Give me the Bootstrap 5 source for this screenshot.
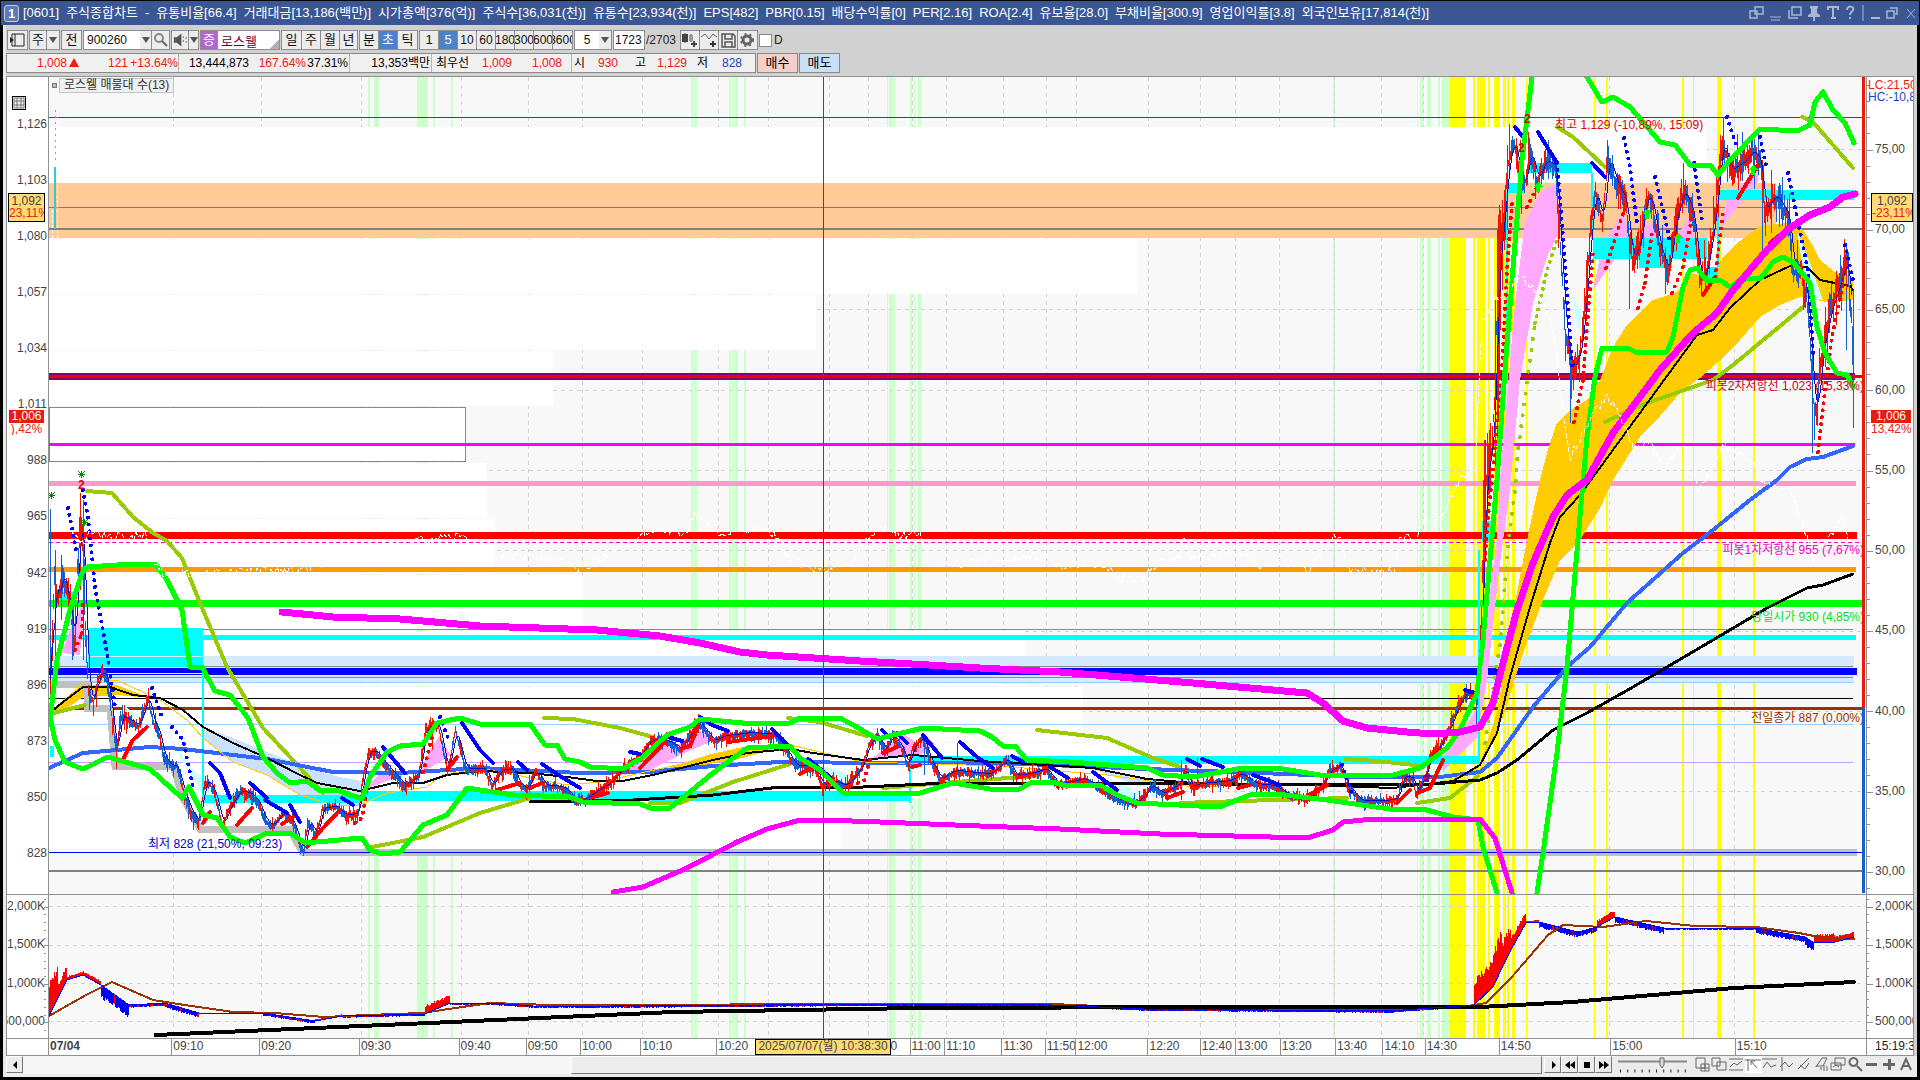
<!DOCTYPE html>
<html lang="ko">
<head>
<meta charset="utf-8">
<meta name="viewport" content="width=device-width, initial-scale=1">
<title>[0601] 주식종합차트</title>
<link href="https://cdn.jsdelivr.net/npm/bootstrap@5.3.0/dist/css/bootstrap.min.css" rel="stylesheet">
<style>
body{background:#000;font:12px/14px "Liberation Sans","Noto Sans CJK KR",sans-serif;color:#222;height:100vh;padding:1px 3px 3px 1px;overflow:hidden}
.titlebar{background:#3a5693;color:#fff;height:24px;font-size:13px;padding-left:3px;flex:none;margin-right:-2px}
.title-no{border:1px solid #c5cfe6;border-radius:3px;width:15px;height:17px;line-height:15px;font-weight:bold;text-align:center;margin-right:4px;background:#5f79b3}
.title-parts{gap:7px}
.tb-ico{width:19px;height:16px;fill:none;stroke:#a9b6d4;stroke-width:2}
.shell{background:#d1d1d1;border-left:3px solid #e8e8e8;margin-left:2px}
.tools{height:28px;padding:5px 0 0 1px;flex:none}
.cell-btn{border:1px solid #8e8e8e;border-left-color:#f6f6f6;background:#ececec;height:20px;padding:0;font:inherit;font-size:13px;color:#111;overflow:hidden;text-align:center;flex:none;display:flex;align-items:center;justify-content:center;white-space:nowrap}
.cell-btn.active{background:#4c83c7;color:#fff}
.cell-sm{font-size:12px}
.grp{border:1px solid #8e8e8e;display:flex;height:20px;flex:none;margin-right:1px;background:#ececec;overflow:hidden}
.grp .cell-btn{border-width:0 1px 0 0;height:18px}
.grp .cell-btn:last-child{border-right:0}
.box-in{border:0;background:#fff;font:inherit;color:#111;padding:0 3px;min-width:0;border-radius:0;height:18px}
.name-in{width:61px;color:#70003c;font-size:13px;background:linear-gradient(135deg,#fff 88%,#b0b0b0 88%)}
.w12{width:12px}.w17{width:17px}.w19{width:19px}.w20{width:20px}
.sel-arrow{border:4px solid transparent;border-top:6px solid #555;border-bottom:0}
.ico{width:17px;height:16px;fill:none;stroke:#666;stroke-width:1}
.quotes{height:23px;flex:none;padding-left:0}
.quote-box{border:1px solid #888;background:#f0f0f0;height:20px;width:750px;color:#000;line-height:18px;font-size:12px}
.quote-box>div{border-right:1px solid #b5b5b5;display:flex;flex:none;overflow:hidden;white-space:nowrap}
.quote-box>div:last-child{border:0;flex:1}
.quote-box span{text-align:right;flex:none}
.up{color:#e8200c}.dn{color:#1546c8}
.order{height:20px;border:1px solid #888;width:41px;margin-left:1px;padding:0;font:inherit;font-size:13px;color:#000}
.buy{background:#f6cfca}.sell{background:#c8dff5}
.chart-grid{display:grid;grid-template-columns:41px minmax(0,1fr) 47px;grid-template-rows:minmax(0,1fr) 144px 17px;border:1px solid #909090;border-bottom:0;background:#fff;margin-right:3px;min-height:0}
.chart-grid>*{position:relative;border-bottom:1px solid #909090;overflow:hidden;min-width:0}
.plot{border-left:1px solid #909090;background:#f8f8f8}
.plot svg{display:block;width:100%;height:100%}
.axis{display:flex;flex-direction:column;justify-content:space-between;color:#444;line-height:12px}
.axis-l{text-align:right;padding:41px 1px 35px 0}
.axis-r{border-left:1px solid #909090;padding:66px 0 17px 8px}
.sub-l{padding:5px 3px 11px 0;direction:rtl}
.sub-r{padding:5px 0 11px 8px}
.tick-svg{position:absolute;top:0;left:0;width:8px;height:100%;stroke:#909090;shape-rendering:crispEdges}
.sub-l .tick-svg{left:auto;right:0}
.tag-box{position:absolute;width:37px;height:29px;background:#ffdc73;border:1px solid #000;line-height:12px;padding-top:1px;text-align:center;overflow:hidden;white-space:nowrap}
.tag-red{position:absolute;width:40px;line-height:12px;text-align:center;color:#e8200c;overflow:hidden;white-space:nowrap}
.tag-red b{display:block;background:#e81c0c;color:#fff;font-weight:400;height:13px}
.top116{top:116px}.top333{top:333px}
.lc{position:absolute;left:1px;top:2px;line-height:12px;white-space:nowrap}
.legend{position:absolute;left:3px;top:1px;color:#333}
.legend i{width:5px;height:5px;border:1px solid #777;background:#bbb;margin-right:2px}
.legend span{background:#f0f0f0;border:1px solid #c4c4c4;line-height:13px;padding:0 4px}
.gridbtn{position:absolute;left:5px;top:19px;width:14px;height:14px;padding:0;border:1px solid #000;background:#fff}
.gridbtn svg{display:block;width:12px;height:12px;stroke:#777;fill:#eee}
.times{display:flex;border-left:1px solid #909090;background:#fff;color:#444}
.times span{flex:1 1 0;min-width:0;border-right:1px solid #909090;text-indent:1px;white-space:nowrap;overflow:hidden;line-height:15px}
.times span:last-of-type{border:0}
.cursor-date{position:absolute;left:706px;top:0;width:136px;height:16px;line-height:13px;background:#ffdc73;border:1px solid #000;white-space:nowrap;text-align:center}
.scrollrow{height:21px;flex:none;background:#ececec;padding:0 2px 3px 0}
.sb-btn{width:17px;height:17px;padding:0;border:1px solid #777;border-left-color:#fff;border-top-color:#fff;background:#ececec;display:flex;align-items:center;justify-content:center;flex:none}
.sb-btn svg{width:12px;height:10px;fill:#000}
.sb-track{background:#f7f7f7;flex:549 1 0}
.sb-thumb{flex:970 1 0;background:#ededed;border:1px solid #777;border-top-color:#fff;border-left-color:#fff;margin-right:2px}
.zoomer{width:70px;height:17px;margin:0 6px}
.zoomer input{position:absolute;opacity:0;width:70px;height:17px}
.zoomer svg,.scroll-ico svg{display:block;stroke:#666;fill:none}
.scroll-ico{width:17px;height:17px;border:0;padding:0;background:none;flex:none}
.scroll-ico.on{background:#fff}
.chk{appearance:none;width:13px;height:13px;background:#fff;border:1px solid #888;margin:0 2px 0 0}
text{font-size:12px}
.ln{fill:none;stroke-linejoin:round;stroke-linecap:round}
.dots{fill:none;stroke-width:4;stroke-linecap:round;stroke-dasharray:0 7}
.solid{fill:none;stroke-width:4;stroke-linecap:round}
</style>
<script src="https://cdn.jsdelivr.net/npm/bootstrap@5.3.0/dist/js/bootstrap.bundle.min.js"></script>
</head>
<body class="d-flex flex-column">
<header class="titlebar d-flex align-items-center">
<span class="title-no">1</span>
<div class="title-parts d-flex flex-grow-1 text-nowrap"><span>[0601]</span><span>주식종합차트</span><span>-</span><span>유통비율[66.4]</span><span>거래대금[13,186(백만)]</span><span>시가총액[376(억)]</span><span>주식수[36,031(천)]</span><span>유통수[23,934(천)]</span><span>EPS[482]</span><span>PBR[0.15]</span><span>배당수익률[0]</span><span>PER[2.16]</span><span>ROA[2.4]</span><span>유보율[28.0]</span><span>부채비율[300.9]</span><span>영업이익률[3.8]</span><span>외국인보유[17,814(천)]</span></div>
<svg class="tb-ico" viewBox="0 0 19 16"><path d="M7 2h8v7H7zM2 6h7v7H2z" stroke-width="1.5"/></svg>
<svg class="tb-ico" viewBox="0 0 19 16"><path d="M3 12h11M4 15h9" stroke-width="1"/></svg>
<svg class="tb-ico" viewBox="0 0 19 16"><path d="M6 2h9v8H6zM3 5v8h9" stroke-width="1.5"/></svg>
<svg class="tb-ico" viewBox="0 0 19 16"><path d="M5 1h8v2l-1 1v4l3 2v2H3v-2l3-2V4L5 3zM8 11h2v5H8z" fill="#a9b6d4" stroke="none"/></svg>
<svg class="tb-ico" viewBox="0 0 19 16"><path d="M4 5V2h10v3M9 2v12M7 13h5"/></svg>
<svg class="tb-ico" viewBox="0 0 19 16"><path d="M4 5c0-5 8-4 6 0-1 2-3 2-3 5M7 12v2"/></svg>
<svg class="tb-ico" viewBox="0 0 19 16"><path d="M1 0v16" stroke-width="1"/><path d="M9 13h9"/></svg>
<svg class="tb-ico" viewBox="0 0 19 16"><path d="M9 3h7v6h-2M6 6h7v7H6z" stroke-width="1.5"/></svg>
<svg class="tb-ico" viewBox="0 0 19 16"><path d="M7 4l8 9M15 4l-8 9" stroke-width="1"/></svg>
</header>
<main class="shell flex-grow-1 d-flex flex-column">
<div class="tools d-flex">
<div class="grp"><button class="cell-btn w19" aria-label="패널"><svg class="ico" viewBox="0 0 17 16"><path d="M3 2h12v12H3zM6 2v12" stroke="#222"/><path d="M1 5l4 3-4 3z" fill="#222" stroke="none"/></svg></button></div>
<div class="grp"><button class="cell-btn w17">주</button><button class="cell-btn w12" aria-label="선택"><i class="sel-arrow"></i></button></div>
<div class="grp"><button class="cell-btn w19">전</button></div>
<div class="grp"><input class="box-in" style="width:56px" value="900260" aria-label="종목코드"><button class="cell-btn w12" aria-label="코드목록"><i class="sel-arrow"></i></button><button class="cell-btn w17" aria-label="검색"><svg class="ico" viewBox="0 0 17 16"><circle cx="7" cy="6" r="4" stroke-width="2" stroke="#888"/><path d="M10 9l5 5" stroke-width="2"/></svg></button></div>
<div class="grp"><button class="cell-btn w17" aria-label="소리"><svg class="ico" viewBox="0 0 17 16"><path d="M2 5h3l5-4v14l-5-4H2z" fill="#555" stroke="none"/><path d="M12 4v8M15 5v6" stroke-dasharray="2 2"/></svg></button><button class="cell-btn" style="width:9px" aria-label="소리 선택"><i class="sel-arrow"></i></button></div>
<div class="grp"><span class="cell-btn w17" style="background:#b565d0;color:#fff">증</span><input class="box-in name-in" value="로스웰" aria-label="종목명"></div>
<div class="grp"><button class="cell-btn w20">일</button><button class="cell-btn w19">주</button><button class="cell-btn w19">월</button><button class="cell-btn w17">년</button></div>
<div class="grp"><button class="cell-btn w19">분</button><button class="cell-btn w19 active">초</button><button class="cell-btn w19">틱</button></div>
<div class="grp"><button class="cell-btn w19">1</button><button class="cell-btn w19 active">5</button><button class="cell-btn cell-sm w19">10</button><button class="cell-btn cell-sm w19">60</button><button class="cell-btn cell-sm w19">180</button><button class="cell-btn cell-sm w19">300</button><button class="cell-btn cell-sm w19">600</button><button class="cell-btn cell-sm w19">3600</button></div>
<div class="grp"><input class="box-in text-center" style="width:24px" value="5" aria-label="주기"><button class="cell-btn w12" aria-label="주기 선택"><i class="sel-arrow"></i></button></div>
<div class="grp"><input class="box-in" style="width:30px;padding:0 1px" value="1723" aria-label="표시 봉수"></div>
<span style="width:34px;line-height:20px">/2703</span>
<div class="grp"><button class="cell-btn w19" aria-label="봉 유형"><svg class="ico" viewBox="0 0 17 16"><path d="M3 1v10M9 2v8" stroke="#444"/><path d="M1 3h4v6H1zM12 9v6M9 12h6" fill="#444" stroke="#444" stroke-width="2"/><path d="M7 3h4v6H7z" fill="#999" stroke="none"/></svg></button><button class="cell-btn w19" aria-label="지표 추가"><svg class="ico" viewBox="0 0 17 16"><path d="M0 5l4-3 4 5 4-5 4 3"/><path d="M12 9v6M9 12h6" stroke="#333" stroke-width="2"/></svg></button><button class="cell-btn w19" aria-label="저장"><svg class="ico" viewBox="0 0 17 16"><path d="M2 2h11l2 2v11H2zM5 2v5h7V2M5 15v-5h7v5" stroke="#555" stroke-width="1.5"/></svg></button><button class="cell-btn w19" aria-label="설정"><svg class="ico" viewBox="0 0 17 16"><circle cx="8" cy="8" r="4" stroke-width="3"/><circle cx="8" cy="8" r="6" stroke-width="2" stroke-dasharray="2 3"/></svg></button></div>
<label class="d-flex align-items-center" style="height:20px"><input type="checkbox" class="chk">D</label>
</div>
<div class="quotes d-flex">
<div class="quote-box d-flex">
<div style="width:172px"><span class="up" style="width:60px">1,008</span><svg width="13" height="18" viewBox="0 0 13 18"><path d="M2 13h10L7 4z" fill="#e8200c"/></svg><span class="up" style="width:48px">121</span><span class="up" style="width:50px">+13.64%</span></div>
<div style="width:171px"><span style="width:70px">13,444,873</span><span class="up" style="width:57px">167.64%</span><span style="width:42px">37.31%</span></div>
<div style="width:82px"><span style="width:80px">13,353백만</span></div>
<div style="width:140px"><span style="width:37px">최우선</span><span class="up" style="width:43px">1,009</span><span class="up" style="width:50px">1,008</span></div>
<div><span style="width:13px">시</span><span class="up" style="width:33px">930</span><span style="width:28px">고</span><span class="up" style="width:41px">1,129</span><span style="width:21px">저</span><span class="dn" style="width:34px">828</span></div>
</div>
<button class="order buy">매수</button><button class="order sell">매도</button>
</div>
<section class="chart-grid flex-grow-1">
<div class="axis axis-l"><span>1,126</span><span>1,103</span><span>1,080</span><span>1,057</span><span>1,034</span><span>1,011</span><span>988</span><span>965</span><span>942</span><span>919</span><span>896</span><span>873</span><span>850</span><span>828</span>
<button class="gridbtn" aria-label="데이터 표"><svg viewBox="0 0 12 12"><path d="M1 1h10v10H1zM1 4h10M1 8h10M4 1v10M8 1v10"/></svg></button>
<div class="tag-box top116" style="left:1px">1,092<br><span class="up">23,11%</span></div>
<div class="tag-red top333" style="left:2px;width:35px"><b>1,006</b>),42%</div></div>
<div class="plot">
<svg id="price" viewBox="49 77 1817 817" preserveAspectRatio="none" shape-rendering="crispEdges">
<g id="bands"></g><g id="gridlines" stroke="#d2d2d2" stroke-dasharray="4 4"></g>
<g fill="#fff"><path d="M49 127h1658v56H49zM49 239h1088v55H49zM49 295h767v55H49zM49 351h504v55H49zM49 463h437v11h1v44H49zM49 519h446v55H49zM49 575h534v55H49zM49 631h976v55H49zM49 687h1034v55H49zM49 743h1078v55H49zM49 799h792v50H49z"/><path d="M49 407.5h416.500v54H49z" stroke="#888"/></g>
<path fill="#fc9" d="M49 183h1727v55H49z"/>
<path fill="#d6eaff" d="M49 656h1805v27H49z"/>
<g id="hl"></g>
<path fill="#fc0" d="M1463 782L1480 763 1497 713 1515 603 1527 540 1540 480 1547 453 1557 423 1570 410 1587 400 1600 380 1613 347 1627 325 1640 312 1653 300 1677 292 1693 273 1710 280 1723 257 1740 241 1760 226 1787 223 1803 230 1812 244 1820 260 1835 272 1853 277V300L1827 302 1800 297 1780 305 1760 317 1740 340 1717 363 1700 378 1683 390 1660 416 1640 437 1613 480 1600 508 1580 540 1560 560 1543 600 1523 653 1503 717 1480 767zM52 714L57 705 83 685H117L150 698 117 695 83 697 60 713zM665 769L707 755 743 747 790 744 743 758 693 767z"/>
<path fill="#c8e2ff" d="M200 726L233 738 267 752 300 765 330 775 362 781V805L333 805 300 795 267 775 233 762 203 738zM1093 769L1147 779 1193 781 1140 786z"/>
<path fill="#faf" d="M1443 757L1478 707 1483 647 1497 537 1500 480 1515 303 1525 223 1540 193 1557 183 1560 230 1547 257 1533 303 1520 380 1510 490 1500 563 1487 680 1477 737 1443 772zM1593 290L1603 243 1623 213 1630 237 1607 270zM1633 247L1640 230 1653 223 1657 240zM1720 230L1727 200 1753 173 1760 170 1757 183 1727 220zM1675 240L1690 215 1695 240 1680 252zM62 653L70 630 77 617 84 600 80 655zM363 790L380 773 400 773 420 770 430 750 440 735 450 755 430 768 400 776zM623 775L643 757 657 742 680 744 693 730 712 732 710 742 680 755 650 770zM870 760L885 748 905 735 920 745 925 735 935 745 920 755z"/>
<path fill="#cff" d="M117 700L143 720 125 712zM167 733L190 767 213 787 230 803 213 807 200 790 180 757zM1572 292L1583 317V337L1577 325zM1797 230L1810 263 1823 300H1810L1800 250zM275 795L290 815 300 830 280 815zM790 745L812 765 808 778 796 762zM820 765L850 775 843 785 825 778zM1117 782L1145 795 1135 800 1120 795z"/>
<g fill="#0ff"><path d="M88 628h115v39H88zM50 746h4v11h-4zM55 592h19v8H55zM202 667h2v130h-2zM203 795h159v8H203zM362 791h547v10H362zM910 756h569v8H910zM909 757h2v46h-2zM1478 550h2v214h-2zM1482 521h11v21h-11zM1497 383h9v12h-9zM1506 193h2v190h-2zM1507 183h18v10h-18zM1527 163h65v10h-65zM1591 173h2v66h-2zM1593 238h114v21H1593zM1639 259h33v9h-33zM1707 267h11v11h-11zM1718 190h136v10h-136zM1717 200h2v67h-2z"/></g>
<path d="M88 656.500h114M88 673.500h114" stroke="#d6eaff"/>
<path fill="none" stroke="#c0c0c0" stroke-width="7" d="M50 684H87V708H110L115 766H173L183 798 200 829H290L302 852.500H1857"/>
<path stroke="#00f" d="M49 852.500H1863"/>
<g class="ln" stroke="#9c0" stroke-width="4"><path d="M87 491L112 493 133 517 153 533 167 541 182 558 200 603 227 667 263 728 290 757 323 793M50 714L85 705M367 848L423 837 480 813 530 798M544 718L573 719 620 728 653 737M650 803H680L733 782 790 764M788 718L820 722 867 736M883 788L980 780 1038 776M1037 730L1107 738 1153 758 1180 767M1180 803L1273 800 1347 798M1345 759L1377 761 1424 766M1417 803L1450 798 1478 776M1605 422L1647 403 1713 380 1733 365 1803 307M1557 127L1573 137 1605 167M1802 117L1813 122 1853 168"/></g>
<path class="dots" stroke="#9c0" style="stroke-dasharray:0 11" d="M1485 743L1500 645 1508 545 1515 490 1518 450 1527 383 1535 323"/><path class="dots" stroke="#9c0" d="M1535 323L1547 270 1557 240"/>
<g class="ln" stroke="#36f" stroke-width="4"><path d="M49 768L83 753 150 747 183 749 267 759 333 772 400 773 480 768 580 773 647 772 713 766 780 762 880 763 1000 763 1147 769 1260 773 1360 777 1440 777 1480 772 1497 758 1533 707 1567 667 1590 647 1627 603 1683 553 1713 530 1750 500 1777 480 1790 467 1807 459 1823 457 1853 446"/></g>
<path class="ln" stroke="#fc0" d="M53 712L83 682 117 680 160 700 187 720 203 738 233 762 267 775 300 795 333 805H360L387 793 427 787 443 775 480 768 567 785 600 782 650 771 713 757 790 745 863 762 1000 766 1107 775 1193 787 1300 783 1393 788 1450 780 1478 768"/>
<g class="ln" stroke="#000"><path stroke-width="2" d="M50 713L63 702 83 687H110L133 695 160 698 183 710 203 727 233 743 267 758 300 775 317 783 360 791 393 783H423L447 775 480 771 530 773 567 777 597 781H623L657 774 713 760 747 753 790 749 813 753 863 760 913 755 980 761 1093 768 1147 779 1193 783 1280 784 1393 788 1453 781 1480 765 1497 733 1510 677 1530 607 1550 543 1560 517 1580 495 1697 335 1713 330 1730 308 1760 280 1790 266 1807 267 1820 280 1850 286 1853 290"/><path stroke-width="3" d="M530 802L633 800 713 795 780 787 863 787 947 783H1147L1293 785 1433 784 1480 780 1497 773 1517 760 1553 730 1587 713 1633 687 1713 640 1767 608 1807 588 1823 585 1853 574"/></g>
<g id="candles"></g>
<g id="sar"></g>
<g class="ln" stroke="#0f0" stroke-width="5"><path d="M50 720L57 660 70 610 82 573 87 567 117 565 155 564 167 580 182 610 190 667H202L215 691 230 695 248 718 263 757 277 773 290 783 307 781 320 791 337 790 362 799 370 777 387 752 400 746 423 744 437 723 460 718 480 724H530L545 745H557L565 759 580 762 590 767 623 769 643 757 667 735 690 727 700 719 753 724 790 723 800 718H840L857 727 877 739 893 735 923 728 980 731 992 737 1003 746H1015L1027 760 1070 762 1147 768 1163 775 1193 777 1243 768 1283 769 1320 775H1393L1420 768 1447 748 1460 730 1477 693 1483 640 1497 480 1505 370 1515 243 1522 160 1532 77M1587 77L1602 102 1613 97 1630 107 1660 142 1675 145 1690 165H1710L1718 175 1730 160 1760 129 1797 131 1810 125 1815 102 1823 92 1833 110 1845 123 1854 143M50 717L55 740 65 762 83 769 108 757 150 769 182 798 189 787 203 815 217 818 230 837 245 843 267 833H290L305 843 362 838 370 850 383 854 400 852 423 825 447 815 467 788 513 795 570 797 583 802 640 804 653 809 670 808 680 800 713 773 747 748 790 746 800 758 820 770 843 793 920 793 953 783 990 789H1020L1030 783 1053 782 1063 785H1100L1117 795 1137 803 1220 807 1250 795 1277 794 1327 800 1390 809H1423L1453 817 1478 820 1483 847 1490 870 1497 893M1537 893L1543 853 1557 753 1567 667 1582 493 1587 437 1595 377 1602 348H1627L1638 353 1667 352 1673 337 1683 287 1690 270 1697 268 1707 281 1720 280 1730 287 1743 278 1760 279 1773 262 1783 257 1793 262 1810 283 1817 327 1825 353 1837 373 1847 375 1853 387"/></g>
<g class="ln" stroke="#f0f"><path stroke-width="7" d="M282 612L333 617 400 619 480 626 597 630 660 636 700 643 740 652 767 655 860 661 980 668 1060 672 1193 683 1307 693 1323 703 1343 721 1367 728 1407 732 1433 734 1460 732 1480 727 1493 703 1503 663 1517 610 1533 563 1553 517 1567 495 1587 480 1613 433 1660 370 1693 333 1717 313 1733 290 1767 250 1790 228 1810 215 1830 207 1843 197 1855 194"/><path stroke-width="5" d="M613 892L643 887 687 868 737 842 767 829 800 820H823L880 822 980 826 1060 829 1160 834 1307 838 1333 830 1343 822 1373 819H1480L1495 838 1512 893"/></g>
<path fill="none" stroke="#fff" stroke-dasharray="5 2" id="white"/>
<path stroke="#3cc" stroke-dasharray="2 4" d="M55.500 110V160"/><path stroke="#3cc" stroke-width="2" d="M55 167V229"/><path stroke="#fff" stroke-dasharray="3 2" d="M57.500 110V240M52 210v30"/>
<g fill="#0f0"><path id="arr" d="M1538 182l5 5h-3v5h-4v-5h-3z"/><use href="#arr" x="109" y="27"/><use href="#arr" x="140" y="51"/><use href="#arr" x="215" y="-17"/></g>
<path fill="#800080" d="M1427 772l5 5h-3v5h-4v-5h-3z"/>
<g stroke="#080"><path id="ast" d="M78 474.500h7M81.500 471v7M78.500 471.500l6 6M84.500 471.500l-6 6"/><use href="#ast" x="-30" y="21"/><use href="#ast" x="3" y="48"/></g>
<g fill="#d0021b" font-weight="bold"><text x="78" y="489">2</text><text x="1524" y="123">2</text><text x="1518" y="152">2</text></g>
<text x="1555" y="129" fill="#e00000">최고 1,129 (-10,89%, 15:09)</text>
<text x="148" y="848" fill="#0000c8">최저 828 (21,50%, 09:23)</text>
<g text-anchor="end"><text x="1864" y="390" fill="#d00020">피봇2차저항선 1,023 (15,33%)</text><text x="1864" y="554" fill="#f000c8">피봇1차저항선 955 (7,67%)</text><text x="1864" y="621" fill="#00e020">당일시가 930 (4,85%)</text><text x="1864" y="722" fill="#930">전일종가 887 (0,00%)</text></g>
<path fill="#e81c0c" d="M1862 77h3v631h-3z"/><path fill="#1560d0" d="M1862 708h3v185h-3z"/>
<path stroke="#f00" d="M823.500 77V894"/>
</svg>
<div class="legend d-flex align-items-center"><i></i><span>로스웰 매물대 수(13)</span></div>
</div>
<div class="axis axis-r"><svg class="tick-svg" id="ticksR"></svg><span>75,00</span><span>70,00</span><span>65,00</span><span>60,00</span><span>55,00</span><span>50,00</span><span>45,00</span><span>40,00</span><span>35,00</span><span>30,00</span>
<div class="lc"><span class="up">LC:21,50</span><br><span class="dn">HC:-10,8</span></div>
<div class="tag-box top116" style="left:4px;width:42px">1,092<br><span class="up">-23,11%</span></div>
<div class="tag-red top333" style="left:4px"><b>1,006</b>13,42%</div></div>
<div class="axis sub-l"><svg class="tick-svg" id="ticksSL"></svg><span>2,000K</span><span>1,500K</span><span>1,000K</span><span>500,000</span></div>
<div class="plot">
<svg viewBox="49 895 1817 143" preserveAspectRatio="none" shape-rendering="crispEdges">
<g id="bands2"></g><g id="grid2" stroke="#d2d2d2" stroke-dasharray="4 4"></g>
<g id="volfill"></g>
<path class="ln" stroke="#930" stroke-width="2" d="M49 1016L86 995 112 982 153 1000 178 1004 233 1012 275 1013 324 1017 367 1015 422 1013 462 1007 490 1003 551 1005 918 1004 1052 1004 1144 1008 1389 1010 1462 1007 1486 1003 1511 978 1548 935 1563 925 1603 927 1646 921 1695 926 1756 927 1799 933 1829 939H1854"/>
<path class="ln" stroke="#000" stroke-width="4" d="M156 1035L429 1023 673 1012 918 1008 1205 1007H1480L1572 1002 1734 988 1854 982"/>
<path class="ln" stroke="#00f" id="volline" stroke-width="1"/>
<path stroke="#f00" d="M823.500 895V1038"/>
</svg></div>
<div class="axis axis-r sub-r"><svg class="tick-svg" id="ticksSR"></svg><span>2,000K</span><span>1,500K</span><span>1,000K</span><span>500,000</span></div>
<div></div>
<div class="times"><span style="flex-grow:124"><b>07/04</b></span><span style="flex-grow:88">09:10</span><span style="flex-grow:100">09:20</span><span style="flex-grow:100">09:30</span><span style="flex-grow:67">09:40</span><span style="flex-grow:54">09:50</span><span style="flex-grow:60">10:00</span><span style="flex-grow:76">10:10</span><span style="flex-grow:150">10:20</span><span style="flex-grow:44">10:50</span><span style="flex-grow:34">11:00</span><span style="flex-grow:57">11:10</span><span style="flex-grow:43">11:30</span><span style="flex-grow:30">11:50</span><span style="flex-grow:72">12:00</span><span style="flex-grow:52">12:20</span><span style="flex-grow:35">12:40</span><span style="flex-grow:44">13:00</span><span style="flex-grow:55">13:20</span><span style="flex-grow:47">13:40</span><span style="flex-grow:42">14:10</span><span style="flex-grow:74">14:30</span><span style="flex-grow:112">14:50</span><span style="flex-grow:125">15:00</span><span style="flex-grow:132">15:10</span><div class="cursor-date">2025/07/07(월) 10:38:30</div></div>
<div class="text-nowrap ps-2" style="border-left:1px solid #909090;line-height:15px">15:19:3</div>
</section>
<div class="scrollrow d-flex">
<button class="sb-btn" aria-label="왼쪽"><svg viewBox="0 0 12 10"><path d="M8 1v8L4 5z"/></svg></button><div class="sb-track"></div><div class="sb-thumb"></div>
<button class="sb-btn" aria-label="재생"><svg viewBox="0 0 12 10"><path d="M5 1v8l4-4z"/></svg></button><button class="sb-btn" aria-label="뒤로"><svg viewBox="0 0 12 10"><path d="M6 1v8L1 5zM11 1v8L6 5z"/></svg></button><button class="sb-btn" aria-label="정지"><svg viewBox="0 0 12 10"><path d="M3 2h6v6H3z"/></svg></button><button class="sb-btn" aria-label="앞으로"><svg viewBox="0 0 12 10"><path d="M1 1v8l5-4zM6 1v8l5-4z"/></svg></button>
<label class="zoomer position-relative"><input type="range" aria-label="확대"><svg width="70" height="17" viewBox="0 0 70 17"><path d="M0 5.500h69" stroke="#888" stroke-width="2"/><path d="M42 2h4v7l-2 3-2-3z" fill="#ddd"/><path d="M2 15h68" stroke="#222" stroke-width="3" stroke-dasharray="1 6.200"/></svg></label>
<span id="icons" class="d-flex"></span>
</div>
</main>
<script>
const $=id=>document.getElementById(id);
// colour bands that mark active minutes: [x, width]
const green=[[368,2],[374,5],[417,11],[433,2],[451,2],[691,2],[694,2],[696,1],[729,2],[732,1],[734,1],[736,2],[744,2],[887,1],[889,4],[894,1],[910,2],[914,1],[918,3],[1333,2],[1417,1],[1420,3],[1427,4],[1438,2],[1442,8]];
const yellow=[[1450,16],[1473,2],[1477,8],[1488,2],[1494,6],[1503,3],[1507,2],[1512,3],[1526,1],[1594,1],[1606,2],[1682,2],[1693,1],[1717,4],[1753,2]];
const bands=(y,h)=>green.map(b=>`<rect x="${b[0]}" y="${y}" width="${b[1]}" height="${h}" fill="#cfc"/>`).join('')+yellow.map(b=>`<rect x="${b[0]}" y="${y}" width="${b[1]}" height="${h}" fill="#ff0"/>`).join('');
$('bands').innerHTML=bands(77,817);$('bands2').innerHTML=bands(895,143);
const gx=[173,261,361,461,528,582,642,718,768,829,868,912,946,1003,1046,1076,1148,1200,1235,1279,1334,1381,1423,1497,1609,1734];
const gy=[149.5,229.5,309.5,390.5,470.5,550.5,631.5,711.5,791.5,871.5],sy=[906.5,945.5,983.5,1021.5];
const vl=(a,b)=>gx.map(x=>`<path d="M${x}.5 ${a}V${b}"/>`).join('');
$('gridlines').innerHTML=vl(77,894)+gy.map(y=>`<path d="M49 ${y}H1862"/>`).join('');
$('grid2').innerHTML=vl(895,1038)+sy.map(y=>`<path d="M49 ${y}H1866"/>`).join('');
// price levels: y, colour, thickness, right end, dash
$('hl').innerHTML=[[117.5,'#e00010',1,1863],[207.5,'#ff3c5a',1,1863],[229,'#808080',2,1863],[376.5,'#800080',7,1855],[376.5,'#f00000',3,1863],[444.5,'#f0f',3,1855],[483.5,'#f9c',5,1856],[535.5,'#f00',7,1857],[542.5,'#f0c',1,1862,'4 3'],[569.5,'#f90',5,1856],[603.5,'#0f0',7,1863],[629.5,'#888',1,1853],[637.5,'#0ff',5,1856],[666.5,'#888',1,1853],[671.5,'#00f',7,1857],[677.5,'#888',1,1853],[682.5,'#9cf',1,1853],[698.5,'#000',1,1853],[708.5,'#930',3,1863],[724.5,'#9cf',1,1853],[762.5,'#c9f',1,1853],[871,'#808080',2,1863]].map(l=>`<path d="M49 ${l[0]}H${l[3]}" stroke="${l[1]}" stroke-width="${l[2]}" ${l[4]?`stroke-dasharray="${l[4]}"`:''}/>`).join('');
let seed=7;const rnd=()=>(seed=(seed*16807)%2147483647)/2147483647;
const parse=s=>s.trim().split(/[ ;]+/).map(p=>p.split(',').map(Number));
function sample(pts,step,fn){for(let i=0;i<pts.length-1;i++){const[a,b]=pts[i],[c,d]=pts[i+1];for(let x=a;x<c;x+=step)fn(x,b+(d-b)*(x-a)/(c-a),d-b)}}
const px=parse(`50,680 54,580 58,600 62,570 66,590 70,610 74,645 77,570 80,510 83,550 85,630 88,690 93,700 97,680 102,670 107,680 112,720 116,755 120,715 130,720 138,725 145,705 148,695 152,720 158,730 163,755 170,765 176,765 183,790 190,810 198,822 204,785 208,780 215,795 222,825 230,805 240,790 250,793 257,800 265,820 272,825 283,812 292,820 300,845 303,850 308,820 316,835 322,808 335,805 345,815 358,812 362,780 368,752 375,750 382,760 395,775 405,785 418,775 425,730 432,723 438,725 447,770 455,730 465,768 484,768 492,785 500,770 512,768 520,785 527,788 535,770 545,785 555,785 565,788 575,800 585,798 597,790 610,782 625,765 640,755 650,740 660,738 670,742 680,748 690,735 697,720 705,730 713,740 725,735 750,732 775,734 783,745 795,765 805,765 815,768 822,785 832,780 845,785 855,775 862,765 868,745 877,735 885,750 892,735 900,745 908,765 912,748 922,737 930,760 940,778 955,770 975,772 990,773 1000,765 1006,758 1015,775 1030,773 1045,768 1058,784 1083,778 1100,787 1115,798 1135,802 1145,795 1150,785 1163,793 1180,782 1185,767 1190,786 1200,783 1230,780 1240,773 1255,783 1273,785 1290,795 1310,797 1320,787 1330,770 1340,765 1347,785 1360,800 1385,800 1397,798 1403,775 1413,778 1415,793 1425,775 1430,755 1440,745 1450,725 1458,705 1466,692 1477,695 1480,640 1484,510 1487,460 1491,455 1494,400 1498,260 1502,230 1508,160 1514,140 1520,180 1525,180 1530,150 1537,180 1545,160 1555,165 1560,250 1565,330 1572,370 1580,350 1585,300 1590,230 1595,190 1602,220 1608,155 1615,180 1625,200 1632,260 1640,240 1645,200 1650,195 1660,250 1668,270 1675,220 1683,190 1692,210 1700,280 1706,270 1714,220 1722,140 1730,170 1745,160 1752,150 1760,160 1764,210 1775,195 1788,215 1793,270 1802,270 1808,310 1813,400 1816,410 1822,350 1830,310 1840,280 1847,260 1853,345`);
let red='',blue='',ma='',avg=[];
sample(px,1,(x,y,sl)=>{const A=x<90?34:x<200?14:x<1420?9:x<1475?12:34;const up=rnd()*A*(rnd()<.3?1:.45),dn=rnd()*A*(rnd()<.3?1:.45);const s=`M${x+.5} ${(y-up).toFixed(0)}V${(y+dn+3).toFixed(0)}`;if(rnd()<(sl<0?.85:.35))red+=s;else blue+=s;avg.push(y);if(avg.length>6)avg.shift();ma+=(ma?'L':'M')+x+' '+(avg.reduce((p,c)=>p+c)/avg.length).toFixed(0)});
// the run-up before 14:50 is a dense red column
red+='M1483.5 480V600M1484.5 440V560M1485.5 440V540M1487.5 440V520M1489.5 430V490M1490.5 430V490M1495.5 300V480M1497.5 230V460M1498.5 215V420M1499.5 205V380M1500.5 210V330M1502.5 200V290M1504.5 190V250M1505.5 190V240M1507.5 145V230';
red+='M55.5 550V660M61.5 555V620M80.5 493V590M96.5 690V707M432.500 718V750M957.500 743V775M1181.500 760V800M1197.500 758V790M1520.500 140V170M1607.500 140V170M1683.500 163V200M1723.500 117V160';
blue+='M50.5 509V720M83.5 500V660M116.5 735V767M924.500 735V775M1570.500 350V423M1629.500 240V309M1665.500 250V294M1762.500 190V250M1812.500 350V453M1846.500 245V350M1853.500 290V428';
$('candles').innerHTML=`<path stroke="#1560d0" d="${blue}"/><path stroke="#f01400" d="${red}"/><path fill="none" stroke="#0a0ac8" d="${ma}"/>`;
// stop-and-reverse trails
const bs=['68,508 76,550','83,490 88,517 95,587','95,587 107,653 115,707','152,688 163,720','172,727 183,740 193,787','210,763 220,773 230,798','250,783 267,798','265,800 287,813','290,805 300,822','342,798 353,805','383,747 405,773','440,717 450,743','462,723 480,750 493,763','518,762 527,770','542,764 560,776 580,788','630,752 640,754','668,737 682,741','700,717 712,725 728,731','772,729 795,753','808,759 830,777','882,730 889,737','897,733 907,743','923,735 942,758','960,742 977,757 993,768','1012,756 1023,762','1050,767 1068,778','1093,772 1117,790','1187,759 1200,766','1202,759 1223,767','1253,775 1280,785','1342,765 1353,797','1465,690 1473,692','1515,127 1523,137','1538,132 1557,163','1557,163 1563,237 1570,337 1572,367','1592,163 1605,177','1624,138 1630,167 1637,223','1655,177 1667,227 1670,243','1694,163 1702,220','1727,117 1737,147','1760,137 1767,170','1788,173 1797,217 1808,270 1813,353','1845,245 1853,280'];
const rs=['75,650 82,633','82,633 83,603','123,760 133,740 147,727','203,823 210,812','237,825 252,808','282,824 293,817','307,847 323,828 340,810','355,823 362,818 367,790','407,785 423,773 433,733','447,770 457,757','497,790 520,783','530,788 542,783','593,797 608,793','640,768 665,742','683,748 690,746 698,727','728,742 773,736','800,774 813,767','858,783 864,781 870,760','883,753 897,747','912,767 920,765','1167,798 1183,792','1238,788 1250,785','1307,796 1327,785','1397,803 1410,790','1417,793 1430,788 1443,760','1485,560 1488,517 1492,480 1502,370 1507,270 1512,203','1527,207 1538,185','1574,422 1583,380','1583,380 1587,327 1593,253','1606,268 1623,213','1638,308 1645,283','1645,283 1652,233','1672,293 1683,267','1683,267 1693,210','1703,295 1715,277','1715,277 1723,213','1738,198 1758,165','1770,243 1790,227','1818,452 1825,390 1832,337 1843,283'];
const trail=(a,c)=>a.map(s=>{const p=parse(s),q=p[p.length-1],steep=Math.abs(q[1]-p[0][1])>1.9*Math.abs(q[0]-p[0][0]);return`<polyline class="${steep?'dots':'solid'}" stroke="${c}" points="${s}"/>`}).join('');
$('sar').innerHTML=trail(bs,'#00f')+trail(rs,'#f00');
let w='';const wp=parse('50,500 85,545 90,530 110,537 145,535 155,563 165,575 300,570 420,540 460,535 490,560 530,555 580,568 620,550 645,533 660,528 685,535 695,515 708,525 720,533 770,530 790,560 820,570 850,562 870,535 880,527 900,535 920,533 930,565 1000,560 1045,555 1060,566 1100,565 1120,578 1145,578 1150,568 1180,555 1182,537 1190,560 1240,550 1260,567 1280,560 1310,568 1330,540 1340,535 1345,560 1350,572 1395,570 1400,535 1415,540 1425,520 1440,520 1450,500 1460,480 1475,467 1482,320 1490,305 1520,275 1530,285 1547,310 1557,350 1560,390 1570,457 1590,420 1607,395 1620,415 1633,450 1650,440 1663,470 1683,445 1700,490 1723,445 1750,460 1765,485 1790,490 1807,537 1813,563 1843,517 1853,565');
sample(wp,2,(x,y)=>{w+=(w?'L':'M')+x+' '+(y+(rnd()-.5)*9).toFixed(0)});$('white').setAttribute('d',w);
const vp=parse('49,1016 58,998 67,980 83,975 101,985 129,1005 165,1003 199,1013 263,1013 315,1021 343,1016 425,1014 450,1003 490,1003 533,1006 612,1006 918,1004 1052,1005 1144,1009 1389,1011 1474,1005 1493,987 1502,968 1511,950 1526,923 1539,922 1578,932 1597,927 1615,917 1664,928 1756,928 1805,937 1814,943 1835,942 1854,937');
$('volline').setAttribute('d','M'+vp.map(p=>p.join(' ')).join('L'));
const off={49:-34,58:-17,67:-4,83:-4,101:14,129:3,165:5,199:1,263:3,315:-2,425:-9,1474:-28,1493:-40,1502:-28,1511:-14,1526:-2,1539:6,1578:5,1597:-8,1615:6,1664:2,1756:6,1805:10,1814:-9,1835:-6};
const flat=[343,450,490,533,612,918,1052,1144,1389];
let vr='',vb='';
for(let i=0;i<vp.length-1;i++){const k=vp[i][0],o=flat.includes(k)?2:(off[k]||0);sample([vp[i],vp[i+1]],1,(x,y)=>{const h=o*(.7+rnd()*.3);const s=`M${x+.5} ${y.toFixed(0)}V${(y+h).toFixed(0)}`;if(h<0||rnd()<.18)vr+=s;else vb+=s})}
$('volfill').innerHTML=`<path stroke="#f00" d="${vr}"/><path stroke="#00f" d="${vb}"/>`;
let t='';for(let i=0;i<51;i++){const y=(72.5+(i-4)*16.05);t+=`<path d="M0 ${y.toFixed(0)}.5h${(i-4)%5?3:6}"/>`}$('ticksR').innerHTML=t;
t='';for(let i=0;i<19;i++)t+=`<path d="M0 ${(4+i*7.7).toFixed(0)}.5h${i%5==1?6:2}"/>`;$('ticksSR').innerHTML=t;$('ticksSL').innerHTML=`<g transform="translate(4 0)">${t}</g>`;
// drawing tools at the foot of the window
const ic=['M2 2h9v10H2zM7 8h8v7H7zM11 8v7M7 12h8','M1 2h8v8H1zM6 6h9v8H6z','M1 3h14M1 14h14M2 11l4-4 3 2 5-4','M3 3v12M0 4h16M6 5l6 7M6 5h4M6 5v4','M0 3h15M1 12l4-6 4 5 5-2','M3 1v14M1 11l5-5 4 5 4-4','M2 13L13 2M4 9l5 4 4-6','M3 11l6-9h5l-4 8H3zM8 14v-3M11 15v-6M14 15v-5','M5 2h10v7H5zM1 7h10v7H1zM3 11l3-2 3 2','M6 2a4 4 0 1 0 1 0zM10 10l5 5','M2 8.500h11','M2 8.500h12M8.500 3v11','M3 14L8 3l5 11M5 10h6'];
$('icons').innerHTML=ic.map((d,i)=>`<button class="scroll-ico${i==3?' on':''}" aria-label="도구 ${i+1}"><svg width="17" height="17" viewBox="0 0 17 17"><path d="${d}" stroke-width="${i==10||i==11?3:i>8?2:1}"/></svg></button>`).join('');
</script>
</body>
</html>
